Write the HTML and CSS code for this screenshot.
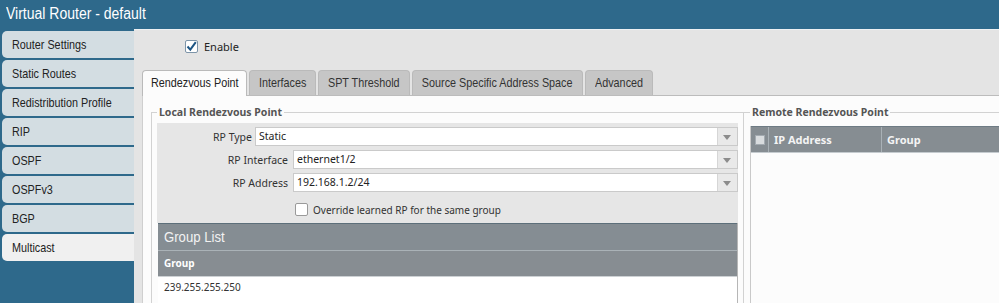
FILE: index.html
```html
<!doctype html>
<html>
<head>
    <meta charset="UTF-8">
    <title>Virtual Router - default</title>
    <link rel="stylesheet" href="styles.css">
</head>
<body>
<div class="hd"><span class="nw">Virtual Router - default</span></div>
<div class="wrap">
    <ul class="side">
        <li><span class="nw">Router Settings</span></li>
        <li><span class="nw">Static Routes</span></li>
        <li><span class="nw">Redistribution Profile</span></li>
        <li><span class="nw">RIP</span></li>
        <li><span class="nw">OSPF</span></li>
        <li><span class="nw">OSPFv3</span></li>
        <li><span class="nw">BGP</span></li>
        <li class="on"><span class="nw">Multicast</span></li>
    </ul>
    <div class="main">
        <label class="enable">
            <span class="cb cb-on"><svg width="11" height="11" viewBox="0 0 11 11"><path d="M1.5 5.5 L4.3 8.6 L9.8 1.2" fill="none" stroke="#1d5584" stroke-width="2"/></svg></span>
            Enable
        </label>
        <ul class="tabs">
            <li class="on t1"><span class="nw">Rendezvous Point</span></li>
            <li class="t2"><span class="nw">Interfaces</span></li>
            <li class="t3"><span class="nw">SPT Threshold</span></li>
            <li class="t4"><span class="nw">Source Specific Address Space</span></li>
            <li class="t5"><span class="nw">Advanced</span></li>
        </ul>
        <div class="panel">
            <fieldset class="fs fs-local">
                <legend>Local Rendezvous Point</legend>
                <div class="form">
                    <div class="row row-type">
                        <label>RP Type</label>
                        <div class="combo"><span>Static</span><i></i></div>
                    </div>
                    <div class="row">
                        <label>RP Interface</label>
                        <div class="combo"><span>ethernet1/2</span><i></i></div>
                    </div>
                    <div class="row">
                        <label>RP Address</label>
                        <div class="combo"><span>192.168.1.2/24</span><i></i></div>
                    </div>
                    <div class="row-chk"><span class="cb"></span>Override learned RP for the same group</div>
                </div>
                <div class="grid">
                    <div class="grid-title"><span class="nw">Group List</span></div>
                    <div class="grid-head">Group</div>
                    <div class="grid-row">239.255.255.250</div>
                </div>
            </fieldset>
            <fieldset class="fs fs-remote">
                <legend>Remote Rendezvous Point</legend>
                <div class="rgrid">
                    <div class="rgrid-head">
                        <div class="c-chk"><span class="cb cb-dis"></span></div>
                        <div class="c-ip">IP Address</div>
                        <div class="c-grp">Group</div>
                    </div>
                </div>
            </fieldset>
        </div>
    </div>
</div>
</body>
</html>
```
FILE: styles.css
```css
html, body, ul, fieldset, legend { margin: 0; padding: 0; }
ul { list-style: none; }
body { width: 999px; height: 303px; overflow: hidden; background: #2e698b; font: 10.5px "Noto Sans", "DejaVu Sans", sans-serif; color: #333; }

/* narrow face: Arial Narrow is not installed, squeeze Liberation Sans */
.nw { display: inline-block; white-space: nowrap; transform: scaleX(.83); transform-origin: 0 50%; }

.hd { height: 30px; padding-left: 6px; color: #fff; font: 16px/27px "Liberation Sans", Arial, sans-serif; }
.hd .nw { transform: scaleX(.875); }
.wrap { display: flex; height: 273px; }

.side { width: 132px; padding: 1px 0 0 2px; }
.side li { height: 27px; margin-bottom: 2px; padding-left: 10px; background: #d3dde2; border-radius: 5px 0 0 5px; color: #222; font: 13.5px/27px "Liberation Sans", Arial, sans-serif; }
.side li .nw { transform: scaleX(.8); }
.side li.on { background: #f0f0f0; }

.main { flex: 1; display: flex; flex-direction: column; padding: 10px 0 0 8px; background: #e4e4e4; border-top: 1px solid #eef1f3; margin-top: -1px; }
.enable { display: flex; align-items: center; gap: 6px; margin-left: 43px; height: 13px; color: #222; font-size: 11px; }

.cb { display: inline-block; box-sizing: border-box; width: 13px; height: 13px; border: 1px solid #9a9a9a; border-radius: 2px; background: #fff; }
.cb-on { border-color: #7d94a8; }
.cb-on svg { display: block; }
.cb-dis { width: 10px; height: 10px; border-color: #a3aab0; background: #d9dcde; border-radius: 0; }

.tabs { display: flex; gap: 2px; margin-top: 17px; align-items: flex-end; border-bottom: 1px solid #bcbcbc; }
.tabs li { display: flex; justify-content: center; box-sizing: border-box; height: 25px; background: #c6c6c6; border: 1px solid #bababa; border-bottom: 0; border-radius: 4px 4px 0 0; color: #333; font: 13.5px/24px "Liberation Sans", Arial, sans-serif; }
.tabs li .nw { flex: none; transform: scaleX(.8); transform-origin: 50% 50%; }
.tabs li.on { height: 26px; background: #fcfcfc; margin-bottom: -1px; color: #222; }
.tabs .t1 { width: 105px; }
.tabs .t2 { width: 67px; }
.tabs .t3 { width: 92px; }
.tabs .t4 { width: 171px; }
.tabs .t5 { width: 68px; }

.panel { flex: 1; display: flex; padding: 9px 0 0 8px; background: #fcfcfc; border-left: 1px solid #cfcfcf; overflow: hidden; }

.fs { border: 1px solid #d2d2d2; min-width: 0; }
.fs legend { padding: 0 2px; color: #555; font-weight: bold; font-size: 10.5px; }
.fs-local { box-sizing: border-box; width: 593px; padding: 0 5px; border-bottom: 0; }
.fs-remote { flex: 1; padding: 0 0 0 6px; border-left: 0; border-right: 0; border-bottom: 0; }

.form { margin-top: 4px; padding-top: 4px; background: #e6e6e6; }
.row { display: flex; align-items: center; height: 19px; margin-bottom: 4px; }
.row label { width: 131px; margin-right: 5px; text-align: right; color: #333; }
.row-type label { width: 95px; margin-right: 3px; }
.combo { flex: 1; display: flex; height: 19px; box-sizing: border-box; border: 1px solid #cacaca; background: #fff; }
.combo span { flex: 1; padding-left: 3px; line-height: 17px; color: #222; }
.combo i { width: 19px; border-left: 1px solid #d6d6d6; background: #e9e9e9; position: relative; }
.combo i:after { content: ""; position: absolute; left: 5px; top: 7px; border-left: 4.5px solid transparent; border-right: 4.5px solid transparent; border-top: 5px solid #8c8c8c; }
.row-chk { display: flex; align-items: center; gap: 5px; height: 27px; padding-left: 138px; color: #333; font-size: 10px; }

.grid { margin-left: 1px; border-right: 1px solid #b6b6b6; background: #fff; height: 200px; }
.grid-title { height: 26px; border-top: 1px solid #5d6f7a; border-bottom: 1px solid #aab2b7; background: #858d93; color: #f2f2f2; padding-left: 6px; font: 14px/26px "Liberation Sans", Arial, sans-serif; }
.grid-title .nw { transform: scaleX(.94); }
.grid-head { height: 25px; line-height: 25px; padding-left: 6px; background: #878d92; color: #fff; font-weight: bold; font-size: 10px; border-bottom: 1px solid #cdd1d4; }
.grid-row { height: 20px; line-height: 20px; padding-left: 6px; color: #333; font-size: 10px; }

.rgrid { margin-top: 7px; height: 200px; border-left: 1px solid #c9c9c9; }
.rgrid-head { display: flex; height: 25px; background: #868d92; border-top: 1px solid #6e7b84; border-bottom: 1px solid #c5cbcf; color: #f4f4f4; font-weight: bold; font-size: 11px; line-height: 25px; }
.rgrid-head > div { padding-left: 5px; border-right: 1px solid #a9b1b6; }
.rgrid-head .c-chk { width: 13px; padding-left: 4px; display: flex; align-items: center; }
.rgrid-head .c-ip { width: 107px; }
.rgrid-head .c-grp { flex: 1; border-right: 0; }
```
